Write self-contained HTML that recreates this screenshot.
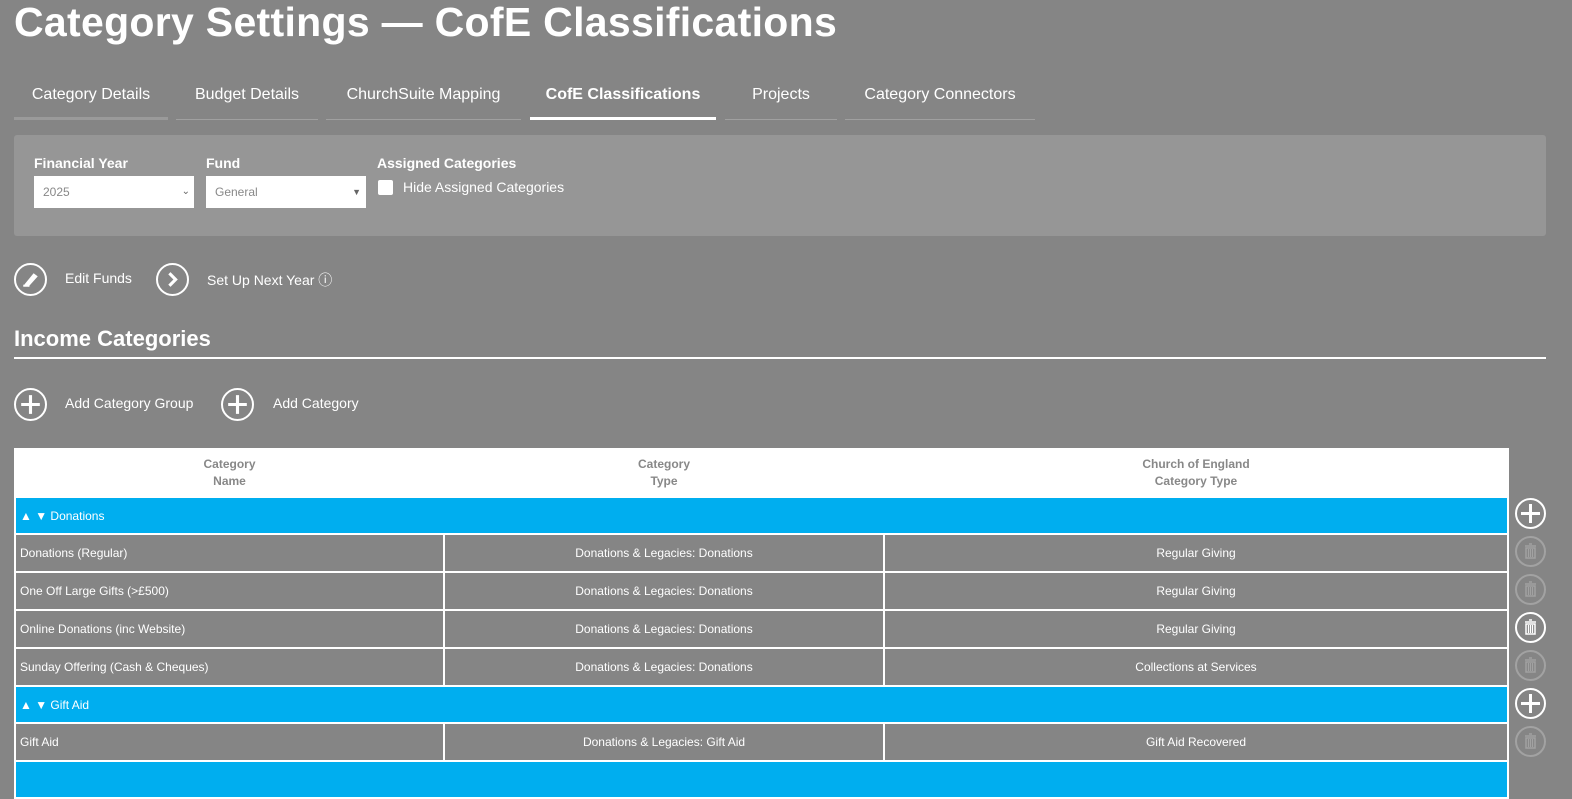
<!DOCTYPE html>
<html><head><style>
body{margin:0;background:#858585;font-family:"Liberation Sans",sans-serif;color:#fff;width:1572px;height:765px;overflow:hidden;position:relative}
.a{position:absolute}
h1{position:absolute;left:14px;top:-1px;margin:0;font-size:41px;font-weight:bold;letter-spacing:0.3px}
.tab{position:absolute;top:84px;font-size:16px;height:36px;border-bottom:1px solid #a0a0a0;text-align:center;box-sizing:border-box;padding-top:2px}
.panel{position:absolute;left:14px;top:135px;width:1532px;height:101px;background:#969696;border-radius:3px}
.lbl{font-size:14px;font-weight:bold;position:absolute;top:155px}
.sel{position:absolute;top:176px;height:32px;background:#fff;color:#888;font-size:12px;line-height:32px;box-sizing:border-box;padding-left:9px}
.circ{position:absolute;width:28px;height:28px;border:2px solid #fff;border-radius:50%;box-sizing:border-box}
.txt{position:absolute;font-size:14px}
table{position:absolute;left:14px;top:448px;width:1495px;border-collapse:collapse;font-size:12px;table-layout:fixed}
td,th{border:2px solid #fff;padding:0 4px}
th{background:#fff;color:#888;font-size:12px;line-height:17px}
tr.h{height:48px}
tr.r{height:38px}
td.c{text-align:center}
tr.g{height:37px}
tr.g td{background:#00aeef}
.ic{position:absolute;left:1515px;width:31px;height:31px;border:2px solid #fff;border-radius:50%;box-sizing:border-box}
.ic.d{border-color:#a2a2a2}
</style></head><body>
<h1>Category Settings — CofE Classifications</h1>
<div class="tab" style="left:14px;width:154px;border-bottom:3px solid #9a9a9a">Category Details</div>
<div class="tab" style="left:176px;width:142px">Budget Details</div>
<div class="tab" style="left:326px;width:195px">ChurchSuite Mapping</div>
<div class="tab" style="left:530px;width:186px;font-weight:bold;border-bottom:3px solid #fff">CofE Classifications</div>
<div class="tab" style="left:725px;width:112px">Projects</div>
<div class="tab" style="left:845px;width:190px">Category Connectors</div>
<div class="panel"></div>
<div class="lbl" style="left:34px">Financial Year</div>
<div class="lbl" style="left:206px">Fund</div>
<div class="lbl" style="left:377px">Assigned Categories</div>
<div class="sel" style="left:34px;width:160px">2025<span style="position:absolute;right:4px;font-size:10px;color:#666">&#8964;</span></div>
<div class="sel" style="left:206px;width:160px">General<span style="position:absolute;right:5px;top:0;font-size:9px;color:#666">▼</span></div>
<div class="a" style="left:378px;top:180px;width:15px;height:15px;background:#fff;border-radius:2px"></div>
<div class="txt" style="left:403px;top:179px">Hide Assigned Categories</div>
<div class="circ" style="left:14px;top:263px;width:33px;height:33px"><svg width="29" height="29" viewBox="0 0 28 28"><path d="M8 19 L17 8 L21 11 L12 21 Z" fill="#fff"/><path d="M7 20h6" stroke="#fff" stroke-width="2"/></svg></div>
<div class="txt" style="left:65px;top:270px">Edit Funds</div>
<div class="circ" style="left:156px;top:263px;width:33px;height:33px"><svg width="29" height="29" viewBox="0 0 28 28"><path d="M11 8l6 6-6 6" stroke="#fff" stroke-width="3" fill="none"/></svg></div>
<div class="txt" style="left:207px;top:270px">Set Up Next Year ⓘ</div>
<div class="a" style="left:14px;top:326px;font-size:22px;font-weight:bold">Income Categories</div>
<div class="a" style="left:14px;top:357px;width:1532px;height:2px;background:#fff"></div>
<div class="circ" style="left:14px;top:388px;width:33px;height:33px"><svg width="29" height="29" viewBox="0 0 28 28"><path d="M14 5v18M5 14h18" stroke="#fff" stroke-width="3"/></svg></div>
<div class="txt" style="left:65px;top:395px">Add Category Group</div>
<div class="circ" style="left:221px;top:388px;width:33px;height:33px"><svg width="29" height="29" viewBox="0 0 28 28"><path d="M14 5v18M5 14h18" stroke="#fff" stroke-width="3"/></svg></div>
<div class="txt" style="left:273px;top:395px">Add Category</div>
<table>
<colgroup><col style="width:429px"><col style="width:440px"><col></colgroup>
<tr class="h"><th>Category<br>Name</th><th>Category<br>Type</th><th>Church of England<br>Category Type</th></tr>
<tr class="g"><td colspan="3">▲ ▼ Donations</td></tr>
<tr class="r"><td>Donations (Regular)</td><td class="c">Donations &amp; Legacies: Donations</td><td class="c">Regular Giving</td></tr>
<tr class="r"><td>One Off Large Gifts (&gt;£500)</td><td class="c">Donations &amp; Legacies: Donations</td><td class="c">Regular Giving</td></tr>
<tr class="r"><td>Online Donations (inc Website)</td><td class="c">Donations &amp; Legacies: Donations</td><td class="c">Regular Giving</td></tr>
<tr class="r"><td>Sunday Offering (Cash &amp; Cheques)</td><td class="c">Donations &amp; Legacies: Donations</td><td class="c">Collections at Services</td></tr>
<tr class="g"><td colspan="3">▲ ▼ Gift Aid</td></tr>
<tr class="r"><td>Gift Aid</td><td class="c">Donations &amp; Legacies: Gift Aid</td><td class="c">Gift Aid Recovered</td></tr>
<tr class="g"><td colspan="3">&nbsp;</td></tr>
</table>
<div class="ic" style="top:498px"><svg width="27" height="27" viewBox="0 0 27 27"><path d="M13.5 4v19M4 13.5h19" stroke="#fff" stroke-width="3"/></svg></div>
<div class="ic d" style="top:536px"><svg width="27" height="27" viewBox="0 0 27 27"><path d="M8 8h11M12 6h3M9 10h9v10H9z" stroke="#a2a2a2" stroke-width="1.5" fill="none"/><path d="M11.5 11v8M13.5 11v8M15.5 11v8" stroke="#a2a2a2" stroke-width="1.2"/></svg></div>
<div class="ic d" style="top:574px"><svg width="27" height="27" viewBox="0 0 27 27"><path d="M8 8h11M12 6h3M9 10h9v10H9z" stroke="#a2a2a2" stroke-width="1.5" fill="none"/><path d="M11.5 11v8M13.5 11v8M15.5 11v8" stroke="#a2a2a2" stroke-width="1.2"/></svg></div>
<div class="ic" style="top:612px"><svg width="27" height="27" viewBox="0 0 27 27"><path d="M8 8h11M12 6h3M9 10h9v10H9z" stroke="#fff" stroke-width="1.5" fill="none"/><path d="M11.5 11v8M13.5 11v8M15.5 11v8" stroke="#fff" stroke-width="1.2"/></svg></div>
<div class="ic d" style="top:650px"><svg width="27" height="27" viewBox="0 0 27 27"><path d="M8 8h11M12 6h3M9 10h9v10H9z" stroke="#a2a2a2" stroke-width="1.5" fill="none"/><path d="M11.5 11v8M13.5 11v8M15.5 11v8" stroke="#a2a2a2" stroke-width="1.2"/></svg></div>
<div class="ic" style="top:688px"><svg width="27" height="27" viewBox="0 0 27 27"><path d="M13.5 4v19M4 13.5h19" stroke="#fff" stroke-width="3"/></svg></div>
<div class="ic d" style="top:726px"><svg width="27" height="27" viewBox="0 0 27 27"><path d="M8 8h11M12 6h3M9 10h9v10H9z" stroke="#a2a2a2" stroke-width="1.5" fill="none"/><path d="M11.5 11v8M13.5 11v8M15.5 11v8" stroke="#a2a2a2" stroke-width="1.2"/></svg></div>
</body></html>
